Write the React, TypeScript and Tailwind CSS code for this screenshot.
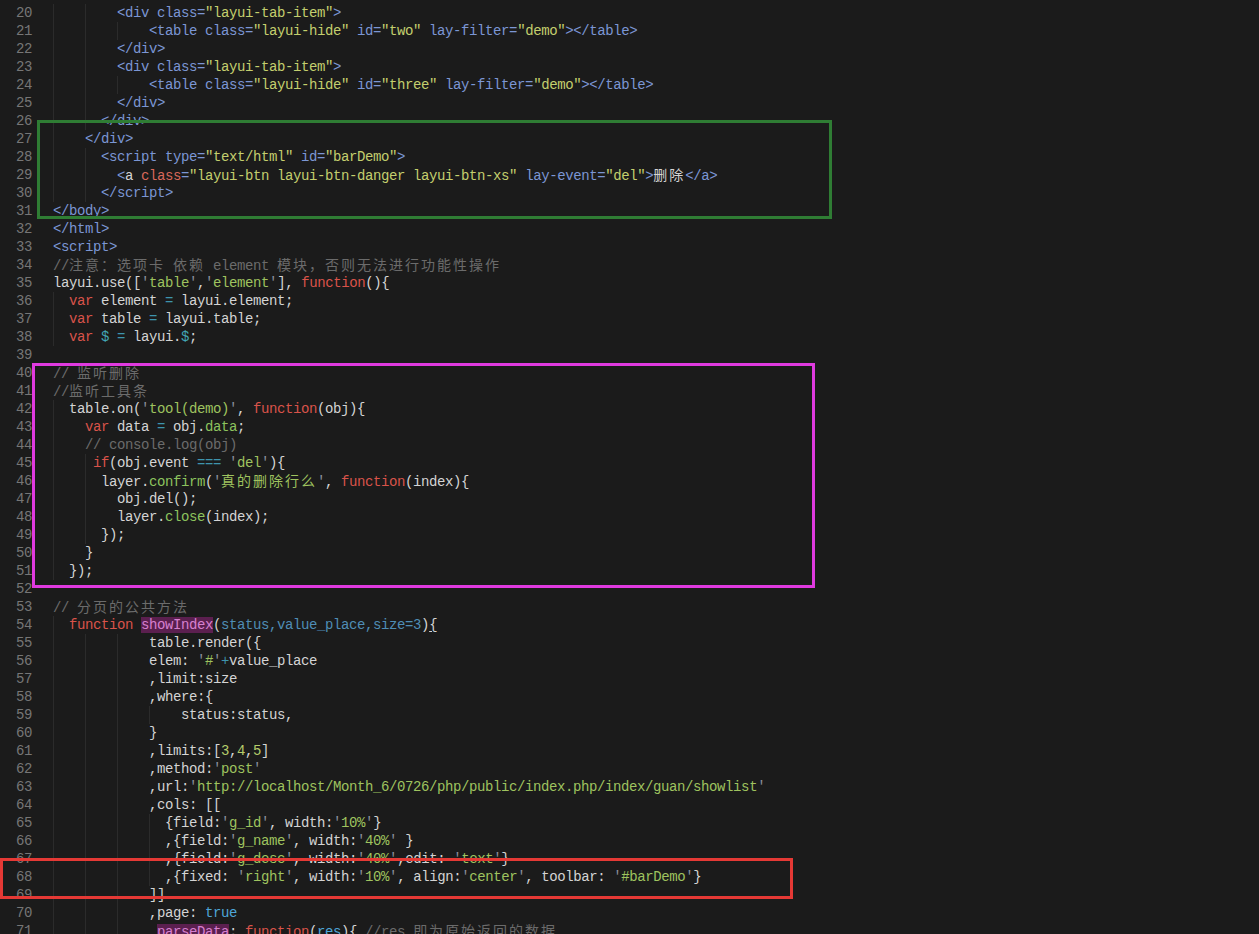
import React from "react";

type Tok = [string, string];
type Line = [number, number, Tok[]];

const color: Record<string, string> = {
  t: "text-[#7b96d4]",
  s: "text-[#c4cf6e]",
  p: "text-[#d4d4d4]",
  k: "text-[#d9534a]",
  g: "text-[#9fc35f]",
  o: "text-[#3e94ad]",
  m: "text-[#8dc35e]",
  c: "text-[#6b6b6b]",
  v: "text-[#4f8db5]",
  h: "bg-[#5b1f4f] text-[#d77fcf]",
  n: "text-[#b5cb6a]",
  b: "text-[#4ea6d8]",
  r: "text-[#d8685a]",
  d: "text-[#42a5b5]",
  u: "text-[#d4d4d4] underline underline-offset-2",
};

const lines: Line[] = [
  [20, 8, [["t", '<div class='], ["s", '"layui-tab-item"'], ["t", ">"]]],
  [21, 12, [["t", "<table class="], ["s", '"layui-hide"'], ["t", " id="], ["s", '"two"'], ["t", " lay-filter="], ["s", '"demo"'], ["t", "></table>"]]],
  [22, 8, [["t", "</div>"]]],
  [23, 8, [["t", '<div class='], ["s", '"layui-tab-item"'], ["t", ">"]]],
  [24, 12, [["t", "<table class="], ["s", '"layui-hide"'], ["t", " id="], ["s", '"three"'], ["t", " lay-filter="], ["s", '"demo"'], ["t", "></table>"]]],
  [25, 8, [["t", "</div>"]]],
  [26, 6, [["t", "</div>"]]],
  [27, 4, [["t", "</div>"]]],
  [28, 6, [["t", "<script type="], ["s", '"text/html"'], ["t", " id="], ["s", '"barDemo"'], ["t", ">"]]],
  [29, 8, [["t", "<"], ["p", "a "], ["r", "class"], ["t", "="], ["s", '"layui-btn layui-btn-danger layui-btn-xs"'], ["t", " lay-event="], ["s", '"del"'], ["t", ">"], ["p", "删除"], ["t", "</a>"]]],
  [30, 6, [["t", "</script>"]]],
  [31, 0, [["t", "</body>"]]],
  [32, 0, [["t", "</html>"]]],
  [33, 0, [["t", "<script>"]]],
  [34, 0, [["c", "//注意：选项卡 依赖 element 模块，否则无法进行功能性操作"]]],
  [35, 0, [["p", "layui.use(["], ["g", "'table'"], ["p", ","], ["g", "'element'"], ["p", "], "], ["k", "function"], ["p", "(){"]]],
  [36, 2, [["k", "var"], ["p", " element "], ["o", "="], ["p", " layui.element;"]]],
  [37, 2, [["k", "var"], ["p", " table "], ["o", "="], ["p", " layui.table;"]]],
  [38, 2, [["k", "var "], ["d", "$"], ["p", " "], ["o", "="], ["p", " layui."], ["d", "$"], ["p", ";"]]],
  [39, 0, []],
  [40, 0, [["c", "// 监听删除"]]],
  [41, 0, [["c", "//监听工具条"]]],
  [42, 2, [["p", "table.on("], ["g", "'tool(demo)'"], ["p", ", "], ["k", "function"], ["p", "(obj){"]]],
  [43, 4, [["k", "var"], ["p", " data "], ["o", "="], ["p", " obj."], ["m", "data"], ["p", ";"]]],
  [44, 4, [["c", "// console.log(obj)"]]],
  [45, 5, [["k", "if"], ["p", "(obj.event "], ["o", "==="], ["p", " "], ["g", "'del'"], ["p", "){"]]],
  [46, 6, [["p", "layer."], ["m", "confirm"], ["p", "("], ["g", "'真的删除行么'"], ["p", ", "], ["k", "function"], ["p", "(index){"]]],
  [47, 8, [["p", "obj.del();"]]],
  [48, 8, [["p", "layer."], ["m", "close"], ["p", "(index);"]]],
  [49, 6, [["p", "});"]]],
  [50, 4, [["p", "}"]]],
  [51, 2, [["p", "});"]]],
  [52, 0, []],
  [53, 0, [["c", "// 分页的公共方法"]]],
  [54, 2, [["k", "function"], ["p", " "], ["h", "showIndex"], ["p", "("], ["v", "status,value_place,size=3"], ["p", ")"], ["u", "{"]]],
  [55, 12, [["p", "table.render({"]]],
  [56, 12, [["p", "elem: "], ["g", "'#'"], ["o", "+"], ["p", "value_place"]]],
  [57, 12, [["p", ",limit:size"]]],
  [58, 12, [["p", ",where:{"]]],
  [59, 16, [["p", "status:status,"]]],
  [60, 12, [["p", "}"]]],
  [61, 12, [["p", ",limits:["], ["n", "3"], ["p", ","], ["n", "4"], ["p", ","], ["n", "5"], ["p", "]"]]],
  [62, 12, [["p", ",method:"], ["g", "'post'"]]],
  [63, 12, [["p", ",url:"], ["g", "'http://localhost/Month_6/0726/php/public/index.php/index/guan/showlist'"]]],
  [64, 12, [["p", ",cols: [["]]],
  [65, 14, [["p", "{field:"], ["g", "'g_id'"], ["p", ", width:"], ["g", "'10%'"], ["p", "}"]]],
  [66, 14, [["p", ",{field:"], ["g", "'g_name'"], ["p", ", width:"], ["g", "'40%'"], ["p", " }"]]],
  [67, 14, [["p", ",{field:"], ["g", "'g_desc'"], ["p", ", width:"], ["g", "'40%'"], ["p", ",edit: "], ["g", "'text'"], ["p", "}"]]],
  [68, 14, [["p", ",{fixed: "], ["g", "'right'"], ["p", ", width:"], ["g", "'10%'"], ["p", ", align:"], ["g", "'center'"], ["p", ", toolbar: "], ["g", "'#barDemo'"], ["p", "}"]]],
  [69, 12, [["p", "]]"]]],
  [70, 12, [["p", ",page: "], ["b", "true"]]],
  [71, 12, [["p", ","], ["h", "parseData"], ["p", ": "], ["k", "function"], ["p", "("], ["b", "res"], ["p", "){ "], ["c", "//res 即为原始返回的数据"]]],
];

// CJK glyphs are two columns wide in the editor
const Txt = ({ text }: { text: string }) => {
  const parts = text.split(/([\u3000-\u303f\u4e00-\u9fff\uff00-\uffef]+)/);
  return (
    <>
      {parts.map((part, i) =>
        i % 2 === 1 ? (
          <span key={i} className="font-['Noto_Sans_CJK_SC',sans-serif] text-[14px] tracking-[2px]">
            {part}
          </span>
        ) : (
          <React.Fragment key={i}>{part}</React.Fragment>
        )
      )}
    </>
  );
};

const Token = ({ tok }: { tok: Tok }) => {
  const [kind, text] = tok;
  if (kind === "g" && text.length > 1 && text.startsWith("'")) {
    return (
      <>
        <span className="text-[#8a8f9a]">'</span>
        <span className={color.g}>
          <Txt text={text.slice(1, -1)} />
        </span>
        <span className="text-[#8a8f9a]">'</span>
      </>
    );
  }
  return (
    <span className={color[kind]}>
      <Txt text={text} />
    </span>
  );
};

const Indent = ({ n }: { n: number }) => {
  const guides: number[] = [];
  for (let i = 0; i < n; i += 4) guides.push(Math.min(4, n - i));
  return (
    <span className="inline-flex h-full">
      {guides.map((w, i) => (
        <span
          key={i}
          className="h-[18px] border-l border-[#2b2b2b]"
          style={{ width: w * 8 }}
        />
      ))}
    </span>
  );
};

export default function App() {
  return (
    <div className="relative w-[1259px] h-[934px] overflow-hidden bg-[#1b1b1b] pt-[4px] font-['Liberation_Mono',monospace] text-[14px] tracking-[-0.4px]">
      {lines.map(([num, indent, toks]) => (
        <div key={num} className="flex h-[18px] leading-[18px] whitespace-pre">
          <div className="w-[32px] shrink-0 text-right text-[#767676]">{num}</div>
          <div className="ml-[21px] flex items-center">
            <Indent n={indent} />
            <span>
              {toks.map((tok, i) => (
                <Token key={i} tok={tok} />
              ))}
            </span>
          </div>
        </div>
      ))}

      {/* annotation boxes */}
      <div className="absolute left-[37px] top-[120px] w-[795px] h-[99px] border-[3px] border-[#2f7d34]" />
      <div className="absolute left-[32px] top-[363px] w-[783px] h-[225px] border-[3px] border-[#e03ae0]" />
      <div className="absolute left-0 top-[858px] w-[793px] h-[41px] border-[3px] border-[#e53935]" />
    </div>
  );
}
